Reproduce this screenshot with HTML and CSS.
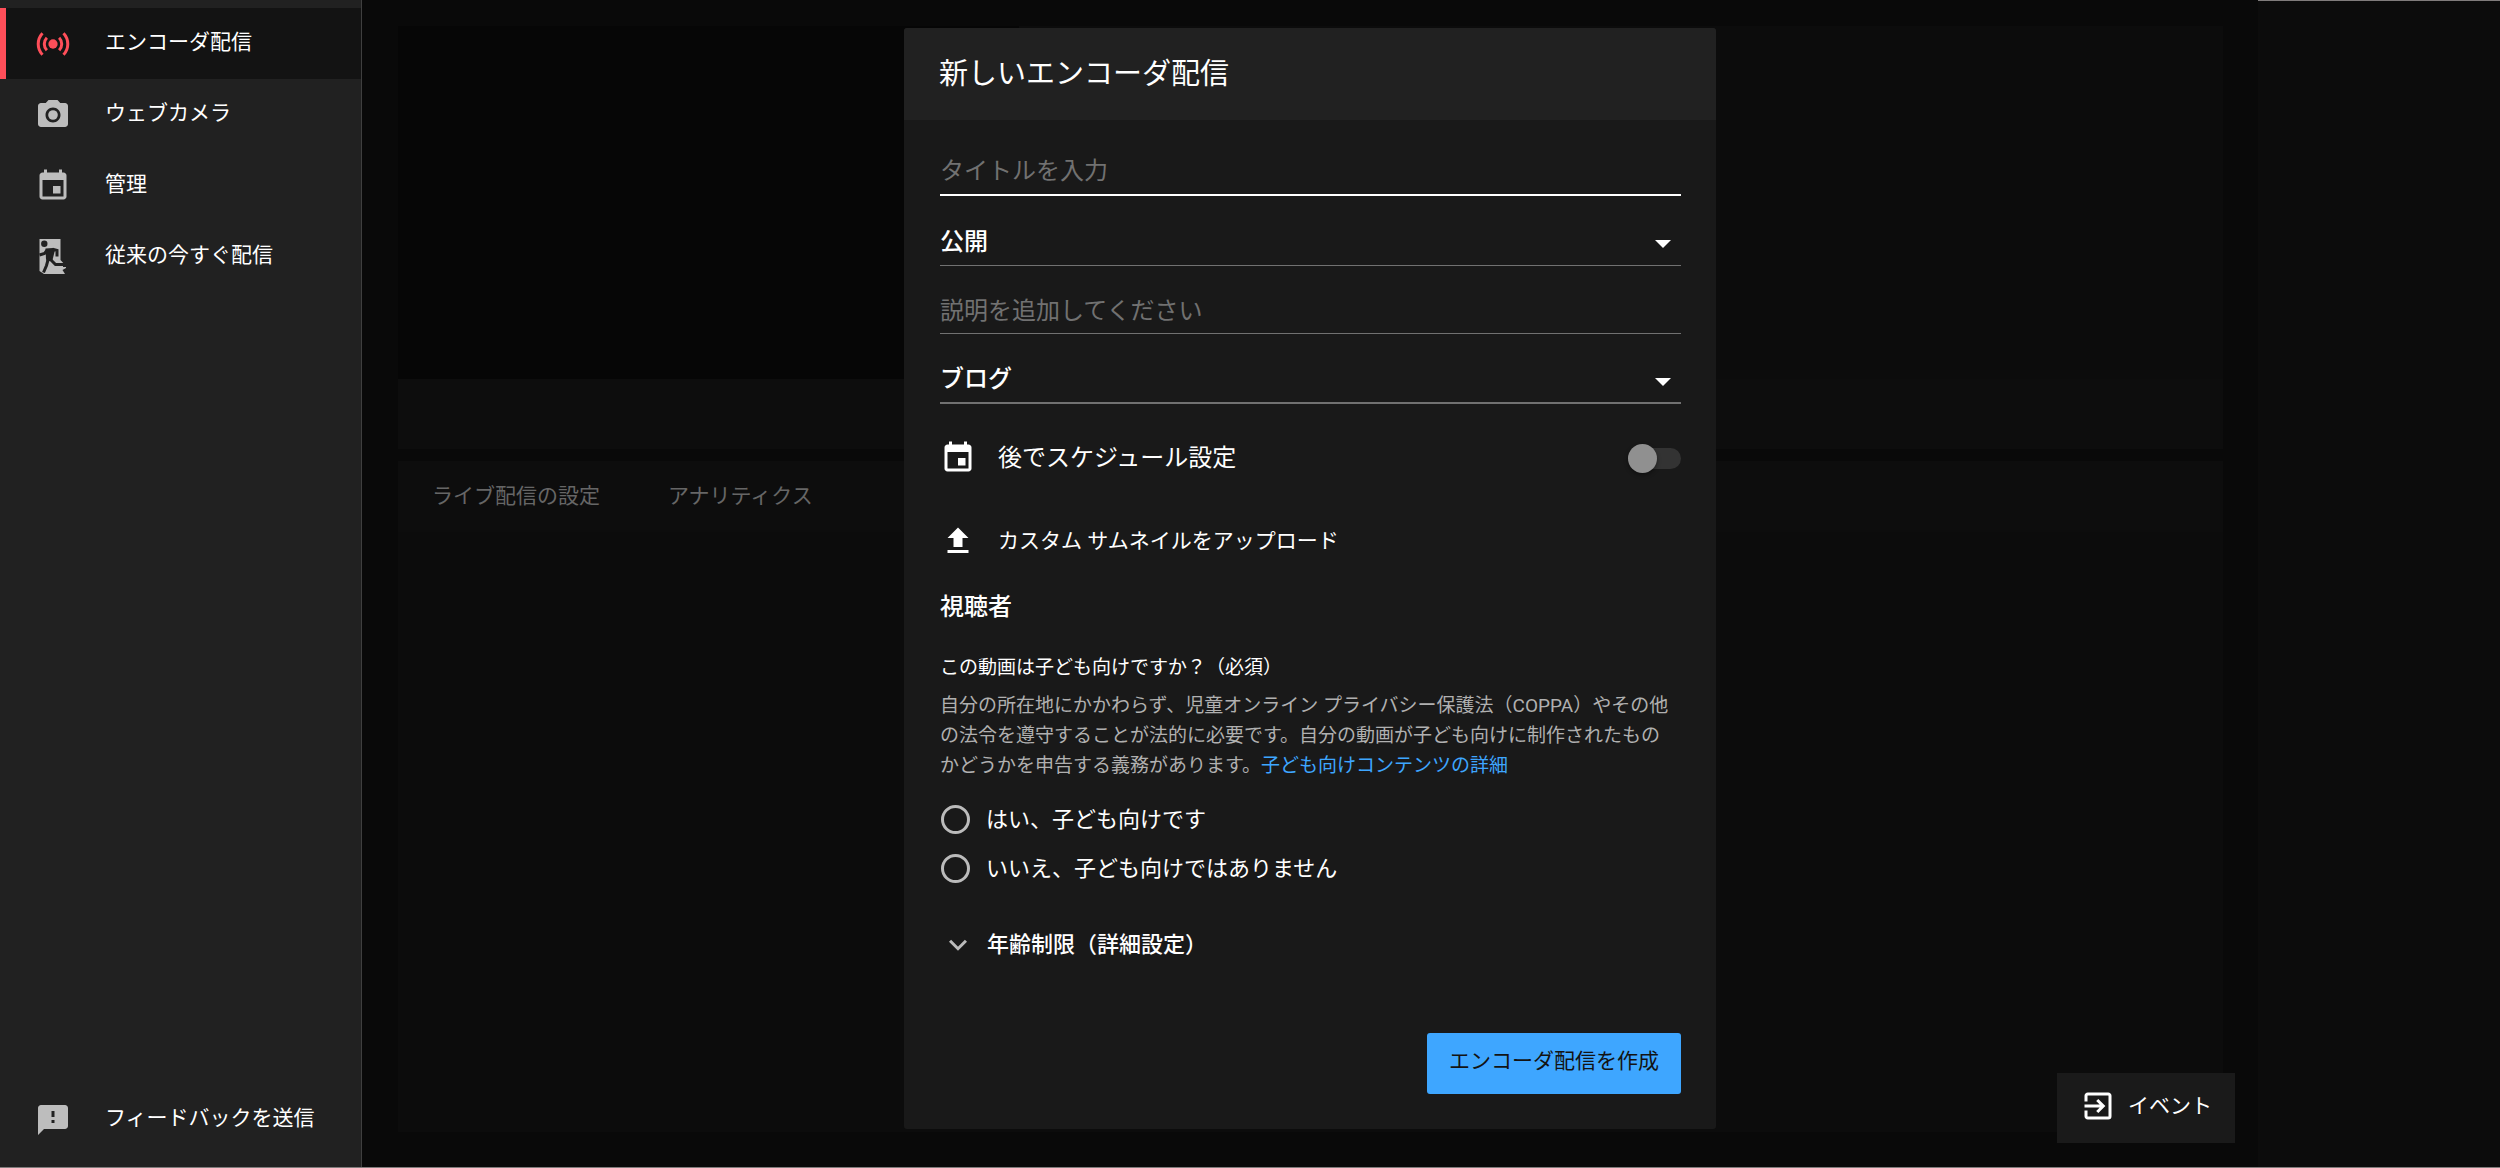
FILE: index.html
```html
<!DOCTYPE html>
<html lang="ja">
<head>
<meta charset="utf-8">
<title>エンコーダ配信</title>
<link rel="stylesheet" href="styles.css">
</head>
<body>
<div class="app">
  <nav class="sidebar">
    <a class="nav-item active" href="#">
      <svg class="icon" viewBox="0 0 24 24"><circle cx="12" cy="12" r="3.1"/><path class="wave" d="M7.9 7.8a6 6 0 0 0 0 8.4M16.1 7.8a6 6 0 0 1 0 8.4M5 4.8a10.5 10.5 0 0 0 0 14.4M19 4.8a10.5 10.5 0 0 1 0 14.4"/></svg>
      <span>エンコーダ配信</span>
    </a>
    <a class="nav-item" href="#">
      <svg class="icon" viewBox="0 0 24 24"><circle cx="12" cy="12" r="3.2"/><path d="M9 2L7.17 4H4c-1.1 0-2 .9-2 2v12c0 1.1.9 2 2 2h16c1.1 0 2-.9 2-2V6c0-1.1-.9-2-2-2h-3.17L15 2H9zm3 15c-2.76 0-5-2.24-5-5s2.24-5 5-5 5 2.24 5 5-2.24 5-5 5z"/></svg>
      <span>ウェブカメラ</span>
    </a>
    <a class="nav-item" href="#">
      <svg class="icon" viewBox="0 0 24 24"><path d="M17 12h-5v5h5v-5zM16 1v2H8V1H6v2H5c-1.11 0-1.99.9-1.99 2L3 19c0 1.1.89 2 2 2h14c1.1 0 2-.9 2-2V5c0-1.1-.9-2-2-2h-1V1h-2zm3 18H5V8h14v11z"/></svg>
      <span>管理</span>
    </a>
    <a class="nav-item" href="#">
      <svg class="icon" viewBox="0 0 36 36"><path d="M4.5 0H25.5V21L31 27V29L27.5 31L30 35H9L4.5 32Z"/><circle class="cut" cx="9.3" cy="4.8" r="3.2"/><path class="cut" d="M10.5 9.5L18 9L20 11L17.5 21L12 23L11 20Z"/><path class="cut-line" d="M12 11L9.5 14.5L4.5 16M17.5 10.3L22 11.5V17.5M15.5 20.5L20.5 25.5H29.5V28M13 21L11.5 26.5L8.5 33.5"/></svg>
      <span>従来の今すぐ配信</span>
    </a>
    <a class="nav-item feedback" href="#">
      <svg class="icon" viewBox="0 0 24 24"><path d="M20 2H4c-1.1 0-1.99.9-1.99 2L2 22l4-4h14c1.1 0 2-.9 2-2V4c0-1.1-.9-2-2-2zm-7 12h-2v-2h2v2zm0-4h-2V6h2v4z"/></svg>
      <span>フィードバックを送信</span>
    </a>
  </nav>
  <main class="main">
    <section class="preview">
      <div class="preview-top"><div class="video"></div></div>
    </section>
    <section class="panel">
      <div class="tabs">
        <button class="tab" type="button">ライブ配信の設定</button>
        <button class="tab" type="button">アナリティクス</button>
      </div>
    </section>
  </main>
  <aside class="chat"></aside>
</div>

<button class="events" type="button">
  <svg class="icon" viewBox="0 0 24 24"><path class="door" d="M4 9V5.2A1.2 1.2 0 0 1 5.2 4H18.8A1.2 1.2 0 0 1 20 5.2V18.8A1.2 1.2 0 0 1 18.8 20H5.2A1.2 1.2 0 0 1 4 18.8V15M3 12H15M11.5 8L15.5 12L11.5 16"/></svg>
  <span>イベント</span>
</button>

<div class="overlay">
<form class="dialog" role="dialog" aria-labelledby="dialog-title">
  <header class="dialog-header"><h1 id="dialog-title">新しいエンコーダ配信</h1></header>
  <div class="dialog-body">
    <input class="field focused" type="text" placeholder="タイトルを入力" aria-label="タイトルを入力">
    <div class="select-wrap">
      <select class="field" aria-label="公開設定"><option>公開</option></select>
    </div>
    <input class="field description" type="text" placeholder="説明を追加してください" aria-label="説明を追加してください">
    <div class="select-wrap">
      <select class="field category" aria-label="カテゴリ"><option>ブログ</option></select>
    </div>
    <div class="row schedule">
      <svg class="icon" viewBox="0 0 24 24"><path d="M17 12h-5v5h5v-5zM16 1v2H8V1H6v2H5c-1.11 0-1.99.9-1.99 2L3 19c0 1.1.89 2 2 2h14c1.1 0 2-.9 2-2V5c0-1.1-.9-2-2-2h-1V1h-2zm3 18H5V8h14v11z"/></svg>
      <label for="later">後でスケジュール設定</label>
      <input class="toggle" id="later" type="checkbox">
    </div>
    <button class="row upload" type="button">
      <svg class="icon" viewBox="0 0 24 24"><path d="M9 16h6v-6h4l-7-7-7 7h4zm-4 2h14v2H5z"/></svg>
      <span>カスタム サムネイルをアップロード</span>
    </button>
    <h2>視聴者</h2>
    <fieldset class="audience">
      <legend>この動画は子ども向けですか？（必須）</legend>
      <p>自分の所在地にかかわらず、児童オンライン プライバシー保護法（COPPA）やその他の法令を遵守することが法的に必要です。自分の動画が子ども向けに制作されたものかどうかを申告する義務があります。<a href="#">子ども向けコンテンツの詳細</a></p>
      <label class="choice"><input type="radio" name="kids">はい、子ども向けです</label>
      <label class="choice"><input type="radio" name="kids">いいえ、子ども向けではありません</label>
    </fieldset>
    <button class="expander" type="button">
      <svg class="icon" viewBox="0 0 24 24"><path class="chevron" d="M6.7 9.2L12 14.5L17.3 9.2"/></svg>
      <span>年齢制限（詳細設定）</span>
    </button>
    <div class="actions"><button class="submit" type="submit">エンコーダ配信を作成</button></div>
  </div>
</form>
</div>
</body>
</html>
```

FILE: styles.css
```css
* { box-sizing: border-box; }

body {
  margin: 0;
  min-height: 100vh;
  background: #090909;
  color: #fff;
  font-family: Roboto, "Noto Sans CJK JP", sans-serif;
  font-size: 21px;
  line-height: 30px;
}

button, input, select {
  font: inherit;
  color: inherit;
  margin: 0;
  padding: 0;
  border: 0;
  border-radius: 0;
  background: none;
}

.icon {
  width: 36px;
  height: 36px;
  flex: none;
  fill: currentColor;
}

.app {
  display: flex;
  min-height: 100vh;
  border-bottom: 1px solid #807c7c;
}

/* Sidebar */
.sidebar {
  width: 362px;
  flex: none;
  display: flex;
  flex-direction: column;
  padding: 8px 0 12px;
  background: #212121;
  border-right: 1px solid #3f3f3f;
}

.nav-item {
  display: flex;
  align-items: center;
  gap: 34px;
  height: 71px;
  padding-left: 29px;
  border-left: 6px solid transparent;
  color: #fff;
  text-decoration: none;
}

.nav-item span { padding-bottom: 3px; }
.nav-item .icon { color: #bdbdbd; }
.nav-item.active { background: #131313; border-left-color: #ff4e59; }
.nav-item.active .icon { color: #ff4e59; }
.feedback { margin-top: auto; }

.wave { fill: none; stroke: currentColor; stroke-width: 2; }
.cut { fill: #212121; }
.cut-line { fill: none; stroke: #212121; stroke-width: 3; }

/* Dimmed page behind the dialog */
.main {
  flex: 1;
  display: flex;
  flex-direction: column;
  gap: 12px;
  padding: 26px 35px 35px 36px;
}

.preview { background: #0d0d0d; padding-bottom: 70px; }
.preview-top { height: 353px; background: #0c0c0c; }
.video { width: 34%; height: 100%; background: #060606; }
.panel { flex: 1; background: #0c0c0c; }

.tabs {
  display: flex;
  gap: 68px;
  height: 71px;
  padding: 0 34px 2px;
  background: #0d0d0d;
}

.tab { color: #666; }

.chat {
  flex: 0 1 242px;
  background: #0c0c0c;
  border-top: 1px solid #807c7c;
}

.events {
  position: fixed;
  right: 265px;
  bottom: 25px;
  display: flex;
  align-items: center;
  gap: 12px;
  height: 70px;
  padding: 0 23px 4px;
  background: #1a1a1a;
}

.door { fill: none; stroke: currentColor; stroke-width: 2; }

/* Dialog */
.overlay {
  position: fixed;
  inset: 0;
  display: flex;
  align-items: flex-start;
  justify-content: center;
  padding: 28px 0 0 120px;
  pointer-events: none;
}

.dialog {
  width: 812px;
  border-radius: 3px;
  overflow: hidden;
  background: #191919;
  pointer-events: auto;
}

.dialog-header {
  display: flex;
  align-items: center;
  height: 92px;
  padding: 0 35px;
  background: #212121;
}

h1 { margin: 0; font-size: 29px; font-weight: 400; }

.dialog-body {
  display: flex;
  flex-direction: column;
  padding: 24px 35px 35px 36px;
}

.field {
  appearance: none;
  width: 100%;
  height: 70px;
  padding-top: 22px;
  font-size: 24px;
  border-bottom: 1px solid #717171;
  outline: none;
}

.field::placeholder { color: #717171; opacity: 1; }
.field.focused { height: 52px; padding-top: 4px; border-bottom: 2px solid #fff; }
.field.description { height: 68px; }
.field.category { border-bottom-width: 2px; }

.select-wrap { display: grid; align-items: center; font-weight: 500; }
.select-wrap > .field, .select-wrap::after { grid-area: 1 / 1; }
.select-wrap::after {
  content: "";
  justify-self: end;
  margin: 26px 10px 0 0;
  border: 8px solid transparent;
  border-top-color: #fff;
  border-bottom: 0;
  pointer-events: none;
}

.row {
  display: flex;
  align-items: center;
  gap: 22px;
  text-align: left;
}

.schedule { margin-top: 36px; height: 36px; font-size: 24px; }
.schedule label { flex: 1; }

.toggle {
  appearance: none;
  display: flex;
  align-items: center;
  width: 53px;
  height: 21px;
  border-radius: 11px;
  background: #333;
}

.toggle::before {
  content: "";
  width: 29px;
  height: 29px;
  border-radius: 50%;
  background: #909090;
  box-shadow: 0 2px 4px #0006;
}

.upload { margin-top: 47px; height: 36px; }

h2 { margin: 30px 0 0; font-size: 24px; font-weight: 500; line-height: 36px; }

.audience { margin: 28px 0 0; padding: 0; border: 0; min-width: 0; }
.audience legend { padding: 0; font-size: 19px; }
.audience p { margin: 8px 0 14px; padding-right: 4px; font-size: 19px; color: #b0b0b0; }
.audience a { color: #3ea6ff; text-decoration: none; }

.choice {
  display: flex;
  align-items: center;
  gap: 16px;
  height: 49px;
  font-size: 22px;
}

.choice input {
  appearance: none;
  width: 29px;
  height: 29px;
  margin-left: 1px;
  border: 3px solid #bbb;
  border-radius: 50%;
}

.expander {
  display: flex;
  align-items: center;
  gap: 11px;
  height: 36px;
  margin-top: 34px;
  font-size: 22px;
  font-weight: 500;
}

.chevron { fill: none; stroke: #bbb; stroke-width: 2; }

.actions { display: flex; justify-content: flex-end; margin-top: 70px; }

.submit {
  height: 61px;
  padding: 0 22px 6px;
  border-radius: 3px;
  background: #3ea6ff;
  color: #131313;
}
```
